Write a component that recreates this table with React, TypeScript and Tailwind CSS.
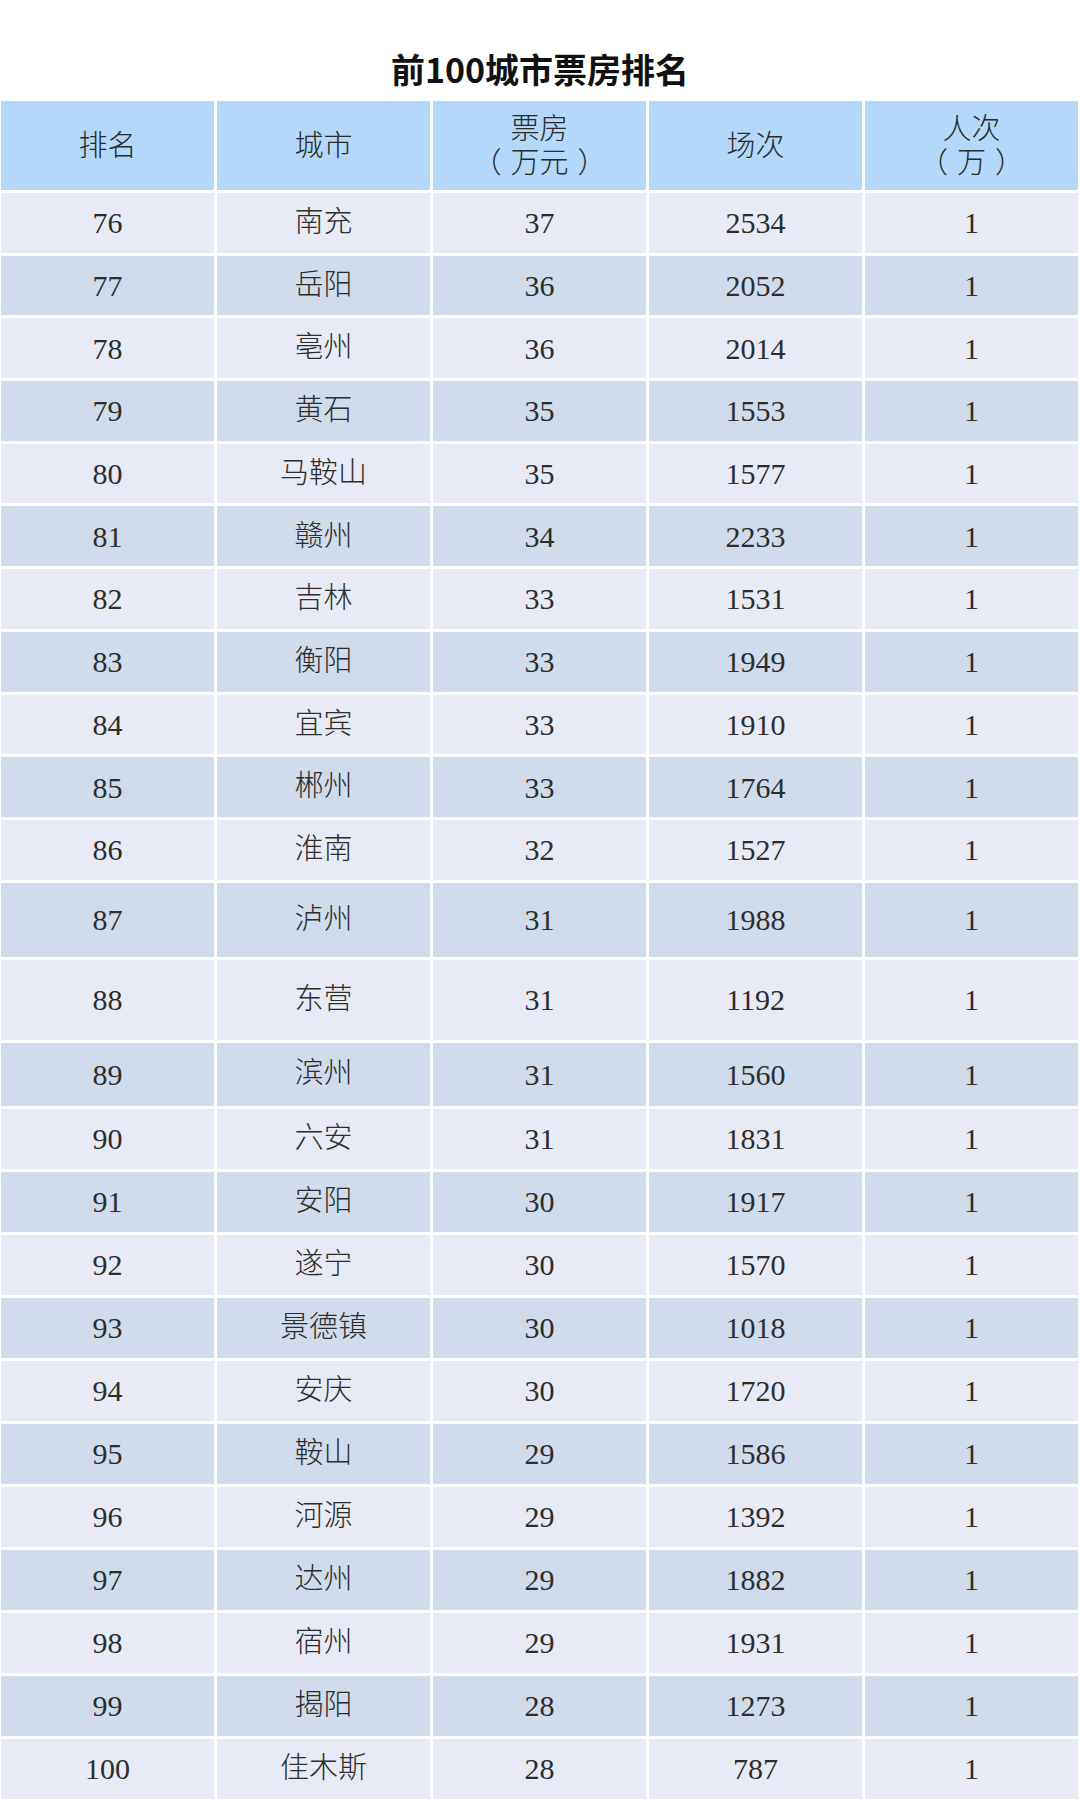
import React from "react";

type Row = { r: string; c: string; b: string; s: string; p: string; h: string };

const rows: Row[] = [
  { r: "76", c: "南充", b: "37", s: "2534", p: "1", h: "h-[59.7px]" },
  { r: "77", c: "岳阳", b: "36", s: "2052", p: "1", h: "h-[59.7px]" },
  { r: "78", c: "亳州", b: "36", s: "2014", p: "1", h: "h-[59.7px]" },
  { r: "79", c: "黄石", b: "35", s: "1553", p: "1", h: "h-[59.7px]" },
  { r: "80", c: "马鞍山", b: "35", s: "1577", p: "1", h: "h-[59.7px]" },
  { r: "81", c: "赣州", b: "34", s: "2233", p: "1", h: "h-[59.7px]" },
  { r: "82", c: "吉林", b: "33", s: "1531", p: "1", h: "h-[59.7px]" },
  { r: "83", c: "衡阳", b: "33", s: "1949", p: "1", h: "h-[59.7px]" },
  { r: "84", c: "宜宾", b: "33", s: "1910", p: "1", h: "h-[59.7px]" },
  { r: "85", c: "郴州", b: "33", s: "1764", p: "1", h: "h-[59.7px]" },
  { r: "86", c: "淮南", b: "32", s: "1527", p: "1", h: "h-[59.7px]" },
  { r: "87", c: "泸州", b: "31", s: "1988", p: "1", h: "h-[74px]" },
  { r: "88", c: "东营", b: "31", s: "1192", p: "1", h: "h-[80px]" },
  { r: "89", c: "滨州", b: "31", s: "1560", p: "1", h: "h-[63px]" },
  { r: "90", c: "六安", b: "31", s: "1831", p: "1", h: "h-[60px]" },
  { r: "91", c: "安阳", b: "30", s: "1917", p: "1", h: "h-[60px]" },
  { r: "92", c: "遂宁", b: "30", s: "1570", p: "1", h: "h-[60px]" },
  { r: "93", c: "景德镇", b: "30", s: "1018", p: "1", h: "h-[60px]" },
  { r: "94", c: "安庆", b: "30", s: "1720", p: "1", h: "h-[60px]" },
  { r: "95", c: "鞍山", b: "29", s: "1586", p: "1", h: "h-[60px]" },
  { r: "96", c: "河源", b: "29", s: "1392", p: "1", h: "h-[60px]" },
  { r: "97", c: "达州", b: "29", s: "1882", p: "1", h: "h-[60px]" },
  { r: "98", c: "宿州", b: "29", s: "1931", p: "1", h: "h-[60px]" },
  { r: "99", c: "揭阳", b: "28", s: "1273", p: "1", h: "h-[60px]" },
  { r: "100", c: "佳木斯", b: "28", s: "787", p: "1", h: "h-[60px]" },
];

function HeadCell({ children }: { children: React.ReactNode }) {
  return (
    <div className="h-[89px] bg-[#b3d8f9] flex flex-col items-center justify-center text-[29px] leading-[34px] text-[#2a2a2a] font-light">
      {children}
    </div>
  );
}

function Paren({ text }: { text: string }) {
  return (
    <span className="flex items-center">
      <span>（</span>
      <span className="mx-[9px]">{text}</span>
      <span>）</span>
    </span>
  );
}

export default function App() {
  return (
    <div className="w-[1080px] h-[1800px] bg-white overflow-hidden [font-family:'Liberation_Serif','Noto_Sans_CJK_SC',serif]">
      <div className="h-[101px] pt-[36px] flex items-center justify-center">
        <h1 className="text-[34px] leading-none font-bold text-[#111] [font-family:'Noto_Sans_CJK_SC','Noto_Sans',sans-serif]">
          前100城市票房排名
        </h1>
      </div>
      <div className="pl-[1px] pr-[2px] grid grid-cols-5 gap-[3px]">
        <HeadCell>排名</HeadCell>
        <HeadCell>城市</HeadCell>
        <HeadCell>
          <span>票房</span>
          <Paren text="万元" />
        </HeadCell>
        <HeadCell>场次</HeadCell>
        <HeadCell>
          <span>人次</span>
          <Paren text="万" />
        </HeadCell>
        {rows.map((row, i) => {
          const bg = i % 2 === 0 ? "bg-[#e8ebf5]" : "bg-[#d0dcec]";
          const cells = [row.r, row.c, row.b, row.s, row.p];
          return cells.map((v, j) => (
            <div
              key={row.r + "-" + j}
              className={`${row.h} ${bg} flex items-center justify-center text-[#2d2d2d] ${
                j === 1 ? "text-[29px] font-light" : "text-[30px]"
              }`}
            >
              {v}
            </div>
          ));
        })}
      </div>
    </div>
  );
}
